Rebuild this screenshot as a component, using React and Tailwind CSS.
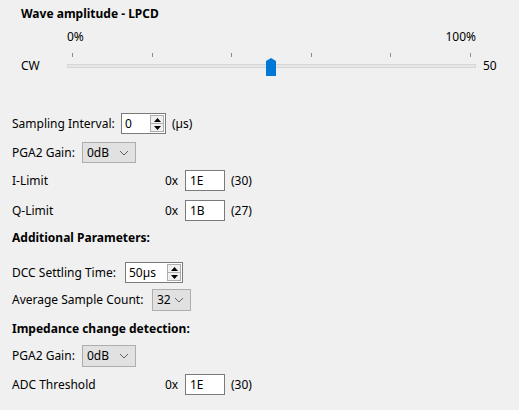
import React from "react";

const FONT = { fontFamily: '"Noto Sans", "Open Sans", Arial, sans-serif' };

function Chevron() {
  return (
    <svg width="10" height="6" viewBox="0 0 10 6" className="shrink-0">
      <path d="M1 1 L5 5 L9 1" fill="none" stroke="#606060" strokeWidth="1" />
    </svg>
  );
}

function Select({ value, width }) {
  return (
    <div
      className={`h-full flex items-center justify-between pl-[4px] pr-[6px] bg-[#e1e1e1] border border-[#adadad] ${width}`}
    >
      <span>{value}</span>
      <Chevron />
    </div>
  );
}

function Spin({ value, width }) {
  return (
    <div className={`h-full flex items-center bg-white border border-[#7a7a7a] pl-[3px] pr-[1px] ${width}`}>
      <span className="flex-1">{value}</span>
      <div className="flex flex-col w-[14px] h-[17px] border border-[#adadad] bg-[#f0f0f0]">
        <div className="flex-1 flex items-center justify-center border-b border-[#adadad]">
          <svg width="7" height="4" viewBox="0 0 7 4">
            <path d="M0 4 L3.5 0 L7 4 Z" fill="#000" />
          </svg>
        </div>
        <div className="flex-1 flex items-center justify-center">
          <svg width="7" height="4" viewBox="0 0 7 4">
            <path d="M0 0 L3.5 4 L7 0 Z" fill="#000" />
          </svg>
        </div>
      </div>
    </div>
  );
}

function HexRow({ label, value, dec, className }) {
  return (
    <div className={`flex items-center h-[21px] ${className}`}>
      <span className="w-[153px]">{label}</span>
      <span className="w-[20px]">0x</span>
      <div className="w-[40px] h-full bg-white border border-[#7a7a7a] flex items-center pl-[4px]">
        {value}
      </div>
      <span className="ml-[6px]">{dec}</span>
    </div>
  );
}

function Slider() {
  const ticks = [72, 152, 231, 311, 390, 470];
  return (
    <svg width="420" height="28" viewBox="62 50 420 28" className="shrink-0">
      {ticks.map((x) => (
        <line key={x} x1={x + 0.5} y1="53" x2={x + 0.5} y2="57" stroke="#8c8c8c" />
      ))}
      <rect x="67.5" y="64.5" width="408" height="3" fill="#e7e7e7" stroke="#d6d6d6" />
      <path d="M266 76 L266 61 L271 58 L276 61 L276 76 Z" fill="#0078d7" />
    </svg>
  );
}

export default function App() {
  return (
    <div
      className="w-[519px] h-[410px] bg-[#f0f0f0] text-black text-[12px] leading-[16px] overflow-hidden"
      style={FONT}
    >
      {/* header + slider */}
      <div className="pl-[21px] pt-[6px] h-[22px] font-bold">Wave amplitude - LPCD</div>
      <div className="flex justify-between pl-[67px] w-[476px] mt-[7px] h-[16px]">
        <span>0%</span>
        <span>100%</span>
      </div>
      <div className="flex items-center mt-[5px] h-[28px]">
        <span className="pl-[21px] w-[62px] mt-[4px]">CW</span>
        <Slider />
        <span className="ml-[1px] mt-[4px]">50</span>
      </div>

      <div className="pl-[12px]">
        <div className="flex items-center h-[21px] mt-[35px]">
          <span className="w-[109px]">Sampling Interval:</span>
          <Spin value="0" width="w-[45px]" />
          <span className="ml-[6px]">(µs)</span>
        </div>
        <div className="flex items-center h-[21px] mt-[8px]">
          <span className="w-[70px]">PGA2 Gain:</span>
          <Select value="0dB" width="w-[54px]" />
        </div>
        <HexRow label="I-Limit" value="1E" dec="(30)" className="mt-[7px]" />
        <HexRow label="Q-Limit" value="1B" dec="(27)" className="mt-[9px]" />

        <div className="font-bold h-[16px] mt-[9px]">Additional Parameters:</div>

        <div className="flex items-center h-[21px] mt-[16px]">
          <span className="w-[113px]">DCC Settling Time:</span>
          <Spin value="50µs" width="w-[58px]" />
        </div>
        <div className="flex items-center h-[22px] mt-[6px]">
          <span className="w-[140px]">Average Sample Count:</span>
          <Select value="32" width="w-[39px]" />
        </div>

        <div className="font-bold h-[16px] mt-[10px]">Impedance change detection:</div>

        <div className="flex items-center h-[22px] mt-[8px]">
          <span className="w-[70px]">PGA2 Gain:</span>
          <Select value="0dB" width="w-[54px]" />
        </div>
        <HexRow label="ADC Threshold" value="1E" dec="(30)" className="mt-[7px]" />
      </div>
    </div>
  );
}
